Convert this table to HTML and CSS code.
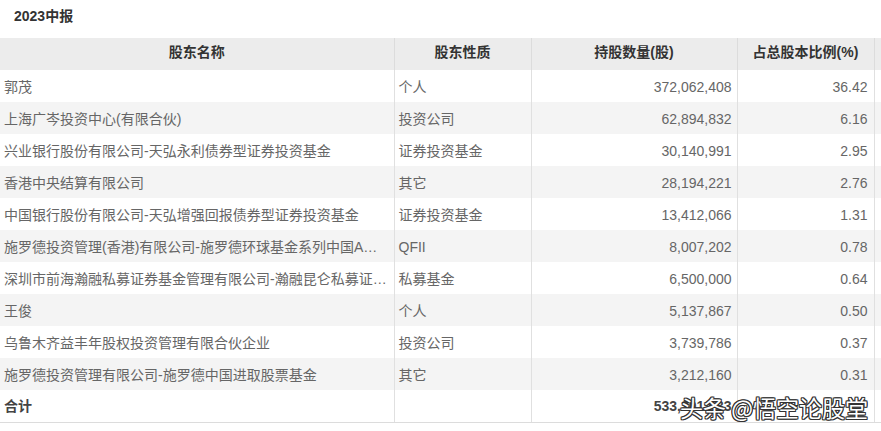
FILE: index.html
```html
<!DOCTYPE html>
<html lang="zh-CN">
<head>
<meta charset="utf-8">
<title>2023中报</title>
<link rel="stylesheet" href="styles.css">
</head>
<body>
<div class="page">
  <div class="title">2023中报</div>
  <table class="holders">
    <colgroup>
      <col class="c-name"><col class="c-type"><col class="c-shares"><col class="c-pct"><col class="c-extra">
    </colgroup>
    <thead>
      <tr><th>股东名称</th><th>股东性质</th><th>持股数量(股)</th><th>占总股本比例(%)</th><th></th></tr>
    </thead>
    <tbody>
      <tr><td>郭茂</td><td>个人</td><td class="num">372,062,408</td><td class="num">36.42</td><td></td></tr>
      <tr><td>上海广岑投资中心(有限合伙)</td><td>投资公司</td><td class="num">62,894,832</td><td class="num">6.16</td><td></td></tr>
      <tr><td>兴业银行股份有限公司-天弘永利债券型证券投资基金</td><td>证券投资基金</td><td class="num">30,140,991</td><td class="num">2.95</td><td></td></tr>
      <tr><td>香港中央结算有限公司</td><td>其它</td><td class="num">28,194,221</td><td class="num">2.76</td><td></td></tr>
      <tr><td>中国银行股份有限公司-天弘增强回报债券型证券投资基金</td><td>证券投资基金</td><td class="num">13,412,066</td><td class="num">1.31</td><td></td></tr>
      <tr><td>施罗德投资管理(香港)有限公司-施罗德环球基金系列中国A…</td><td>QFII</td><td class="num">8,007,202</td><td class="num">0.78</td><td></td></tr>
      <tr><td>深圳市前海瀚融私募证券基金管理有限公司-瀚融昆仑私募证…</td><td>私募基金</td><td class="num">6,500,000</td><td class="num">0.64</td><td></td></tr>
      <tr><td>王俊</td><td>个人</td><td class="num">5,137,867</td><td class="num">0.50</td><td></td></tr>
      <tr><td>乌鲁木齐益丰年股权投资管理有限合伙企业</td><td>投资公司</td><td class="num">3,739,786</td><td class="num">0.37</td><td></td></tr>
      <tr><td>施罗德投资管理有限公司-施罗德中国进取股票基金</td><td>其它</td><td class="num">3,212,160</td><td class="num">0.31</td><td></td></tr>
      <tr class="total"><td>合计</td><td></td><td class="num">533,301,533</td><td class="num"></td><td></td></tr>
    </tbody>
  </table>
  <div class="watermark">头条 @悟空论股堂</div>
</div>
</body>
</html>
```
FILE: styles.css
```css
html, body {
  margin: 0;
  padding: 0;
  background: #fff;
}
body {
  font-family: "Liberation Sans", "Noto Sans CJK SC", sans-serif;
  font-size: 14px;
  color: #666;
}
.page {
  position: relative;
  width: 881px;
  height: 431px;
  overflow: hidden;
}
.title {
  height: 38px;
  box-sizing: border-box;
  padding: 8px 0 0 14px;
  line-height: 16px;
  font-weight: bold;
  color: #333;
}
.holders {
  width: 881px;
  table-layout: fixed;
  border-collapse: collapse;
}
.c-name { width: 394px; }
.c-type { width: 137px; }
.c-shares { width: 206px; }
.c-pct { width: 137px; }
.c-extra { width: 7px; }
.holders th {
  height: 32px;
  box-sizing: border-box;
  padding: 0 0 3px;
  background: #ececec;
  color: #333;
  font-weight: bold;
  text-align: center;
  border-left: 1px solid #dcdcdc;
  line-height: 27px;
}
.holders th:first-child,
.holders td:first-child {
  border-left: none;
}
.holders td {
  height: 32px;
  box-sizing: border-box;
  padding: 1px 5px 0 4px;
  border-left: 1px solid #e0e0e0;
  white-space: nowrap;
  overflow: hidden;
  line-height: 20px;
}
.holders tbody tr:nth-child(even) td {
  background: #f4f4f4;
}
.holders td.num {
  text-align: right;
  padding-right: 5px;
}
.holders td:nth-child(4).num {
  padding-right: 6px;
}
.holders tr.total td {
  font-weight: bold;
  color: #444;
  border-bottom: 1px solid #dcdcdc;
}
.watermark {
  position: absolute;
  left: 680px;
  top: 393px;
  font-family: "Noto Sans CJK SC", sans-serif;
  font-size: 23px;
  line-height: 28px;
  color: #fff;
  white-space: nowrap;
  text-shadow:
    1px 0 0 #333, -1px 0 0 #333, 0 1px 0 #333, 0 -1px 0 #333,
    1px 1px 0 #333, -1px -1px 0 #333, 1px -1px 0 #333, -1px 1px 0 #333;
}
```
